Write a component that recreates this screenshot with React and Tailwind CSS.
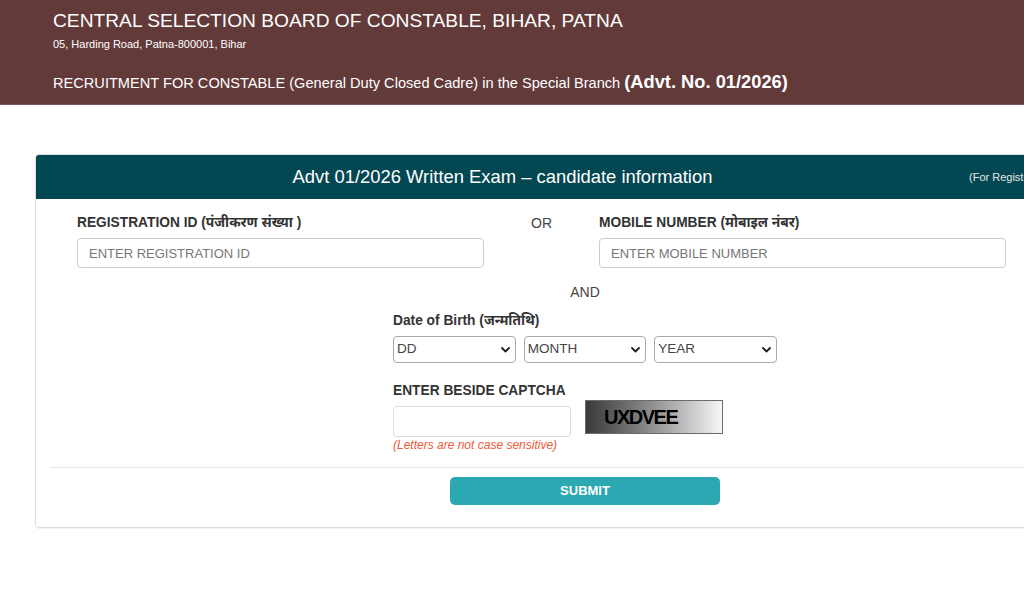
import React from "react";

function Chevron() {
  return (
    <svg
      className="pointer-events-none absolute right-[6px] top-1/2 -translate-y-1/2"
      width="9"
      height="6"
      viewBox="0 0 9 6"
      fill="none"
    >
      <path d="M1 1l3.5 3.5L8 1" stroke="#222" strokeWidth="1.8" strokeLinecap="round" strokeLinejoin="round" />
    </svg>
  );
}

function Select({ label }) {
  return (
    <div className="relative flex-1">
      <select
        defaultValue=""
        className="h-[27px] w-full appearance-none rounded-[4px] border border-[#a9a9a9] bg-white pl-[3px] text-[13.5px] text-[#444] outline-none"
      >
        <option value="">{label}</option>
      </select>
      <Chevron />
    </div>
  );
}

export default function App() {
  return (
    <div className="min-h-screen w-full overflow-hidden bg-white font-['Liberation_Sans','Noto_Sans_Devanagari','Lohit_Devanagari',Arial,sans-serif]">
      <header className="h-[105px] border-b border-[#7b5a5a] bg-[#633a3a] pl-[53px] pt-[9px] text-white">
        <h1 className="text-[19.2px] leading-6">CENTRAL SELECTION BOARD OF CONSTABLE, BIHAR, PATNA</h1>
        <p className="mt-[3px] text-[11px] leading-4">05, Harding Road, Patna-800001, Bihar</p>
        <p className="mt-[18px] text-[14.6px] leading-6">
          RECRUITMENT FOR CONSTABLE (General Duty Closed Cadre) in the Special Branch{" "}
          <span className="text-[18.3px] font-bold">(Advt. No. 01/2026)</span>
        </p>
      </header>

      <div className="ml-[35px] mt-[49px] w-[1100px] shrink-0 rounded-[4px] border border-[#dedede] shadow-[0_1px_1px_rgba(0,0,0,0.06)]">
        <div className="flex h-[44px] items-center rounded-t-[3px] bg-[#034752]">
          <div className="w-[933px] text-center text-[18.4px] leading-5 text-white">
            Advt 01/2026 Written Exam – candidate information
          </div>
          <div className="whitespace-nowrap text-[11px] leading-4 text-[#e6e6e6]">
            (For Registered Candidates)
          </div>
        </div>

        <div className="pb-[22px] pt-[15px]">
          <div className="flex pl-[41px]">
            <div className="w-[407px]">
              <label className="block text-[13.75px] font-bold leading-[18px] text-[#333]">
                REGISTRATION ID (पंजीकरण संख्या )
              </label>
              <input
                placeholder="ENTER REGISTRATION ID"
                className="mt-[6px] h-[30px] w-full rounded-[4px] border border-[#cccccc] px-[11px] text-[13px] text-[#555] outline-none placeholder:text-[#777]"
              />
            </div>
            <div className="w-[115px] text-center text-[14px] leading-[18px] text-[#444]">OR</div>
            <div className="w-[407px]">
              <label className="block text-[13.75px] font-bold leading-[18px] text-[#333]">
                MOBILE NUMBER (मोबाइल नंबर)
              </label>
              <input
                placeholder="ENTER MOBILE NUMBER"
                className="mt-[6px] h-[30px] w-full rounded-[4px] border border-[#cccccc] px-[11px] text-[13px] text-[#555] outline-none placeholder:text-[#777]"
              />
            </div>
          </div>

          <div className="mt-[14px] text-center text-[14px] leading-5 text-[#444]">AND</div>

          <div className="mx-auto mt-[10px] w-[384px]">
            <label className="block text-[13.75px] font-bold leading-[18px] text-[#333]">
              Date of Birth (जन्मतिथि)
            </label>
            <div className="mt-[6px] flex gap-[8px]">
              <Select label="DD" />
              <Select label="MONTH" />
              <Select label="YEAR" />
            </div>

            <div className="mt-[19px] flex items-start gap-[14px]">
              <div className="w-[178px] shrink-0">
                <label className="block whitespace-nowrap text-[13.75px] font-bold leading-[18px] text-[#333]">
                  ENTER BESIDE CAPTCHA
                </label>
                <input className="mt-[6px] h-[31px] w-full rounded-[4px] border border-[#dddddd] px-[10px] text-[13.5px] outline-none" />
                <p className="whitespace-nowrap text-[12px] italic leading-4 text-[#ec5a38]">
                  (Letters are not case sensitive)
                </p>
              </div>
              <div className="mt-[18px] flex h-[34px] w-[138px] shrink-0 items-center border border-[#6b6b6b] bg-gradient-to-r from-[#3a3a3a] to-[#f7f7f7] pl-[18px]">
                <span className="text-[20px] font-bold leading-none tracking-[-1.5px] text-black">UXDVEE</span>
              </div>
            </div>
          </div>

          <div className="mx-[14px] mt-[14px] border-t border-[#e4e4e4]" />

          <button className="mx-auto mt-[9px] block h-[28px] w-[270px] rounded-[5px] bg-[#2ba8b2] text-[13px] font-bold text-white">
            SUBMIT
          </button>
        </div>
      </div>
    </div>
  );
}
